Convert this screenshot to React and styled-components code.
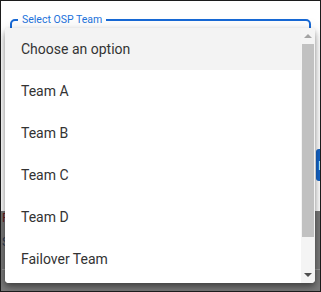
import React from "react";
import styled, { createGlobalStyle } from "styled-components";

const options = [
  "Choose an option",
  "Team A",
  "Team B",
  "Team C",
  "Team D",
  "Failover Team",
  "Team E"
];

const GlobalStyle = createGlobalStyle`
  html, body {
    margin: 0;
    padding: 0;
    background: #ffffff;
  }
  body {
    font-family: Roboto, "Liberation Sans", sans-serif;
  }
`;

const App = () => {
  return (
    <Frame>
      <GlobalStyle />
      <Field>
        <Legend>Select OSP Team</Legend>
      </Field>
      <ButtonRow>
        <SaveButton>Reassign</SaveButton>
      </ButtonRow>
      <Backdrop>
        <BackdropLabel>Failover</BackdropLabel>
        <BackdropText>Status</BackdropText>
        <BackdropRule />
      </Backdrop>

      <Menu>
        <List>
          {options.map((label, i) => (
            <Item key={label} selected={i === 0}>
              {label}
            </Item>
          ))}
        </List>
        <Scrollbar>
          <ArrowButton>
            <Arrow up />
          </ArrowButton>
          <Thumb />
          <Track />
          <ArrowButton>
            <Arrow />
          </ArrowButton>
        </Scrollbar>
      </Menu>
    </Frame>
  );
};

const Frame = styled.div`
  position: relative;
  box-sizing: border-box;
  width: 321px;
  height: 292px;
  border: 1px solid #1c1c1c;
  background: #ffffff;
  overflow: hidden;
  display: flex;
  flex-direction: column;
`;

const Field = styled.fieldset`
  box-sizing: border-box;
  width: 301px;
  height: 46px;
  margin: 13px 0 0 9px;
  padding: 0 6px;
  border: 2px solid #1769d6;
  border-radius: 5px;
`;

const Legend = styled.legend`
  padding: 0 4px;
  font-size: 10.5px;
  line-height: 12px;
  color: #2373dc;
`;

const ButtonRow = styled.div`
  display: flex;
  justify-content: flex-end;
  margin-top: 89px;
`;

const SaveButton = styled.button`
  width: 80px;
  height: 32px;
  margin-right: -76px;
  padding: 0 0 0 2px;
  border: none;
  border-radius: 3px;
  background: #1565c8;
  color: #ffffff;
  font-family: Roboto, "Liberation Sans", sans-serif;
  font-size: 13px;
  text-align: left;
`;

const Backdrop = styled.div`
  flex: 1;
  margin-top: 30px;
  background: #7a7a7a;
  display: flex;
  flex-direction: column;
  gap: 6px;
  padding: 0 0 0 1px;
`;

const BackdropLabel = styled.div`
  font-size: 12px;
  line-height: 14px;
  color: #6e1e1e;
`;

const BackdropText = styled.div`
  margin-top: 4px;
  font-size: 12px;
  line-height: 14px;
  color: #2f3f58;
`;

const BackdropRule = styled.div`
  margin-top: 14px;
  height: 1px;
  background: #9a9a9a;
`;

const Menu = styled.div`
  position: absolute;
  left: 4px;
  top: 27px;
  width: 310px;
  height: 255px;
  display: flex;
  background: #ffffff;
  border-radius: 4px;
  overflow: hidden;
  box-shadow: 0 3px 5px rgba(0, 0, 0, 0.3), 0 6px 10px rgba(0, 0, 0, 0.14),
    0 1px 14px rgba(0, 0, 0, 0.12);
`;

const List = styled.ul`
  flex: 1;
  margin: 0;
  padding: 0;
  list-style: none;
  overflow: hidden;
`;

const Item = styled.li`
  display: flex;
  align-items: center;
  height: 42px;
  padding-left: 16px;
  font-size: 14px;
  color: #333333;
  background: ${props => (props.selected ? "#f3f3f3" : "#ffffff")};
`;

const Scrollbar = styled.div`
  width: 14px;
  display: flex;
  flex-direction: column;
  background: #f4f4f4;
`;

const ArrowButton = styled.div`
  height: 16px;
  display: flex;
  justify-content: center;
  align-items: center;
`;

const Arrow = styled.span`
  width: 0;
  height: 0;
  border-left: 4px solid transparent;
  border-right: 4px solid transparent;
  ${props =>
    props.up
      ? "border-bottom: 4px solid #a3a3a3;"
      : "border-top: 4px solid #4f4f4f;"}
`;

const Thumb = styled.div`
  height: 193px;
  margin: 0 1px;
  background: #c1c1c1;
`;

const Track = styled.div`
  flex: 1;
`;

export default App;
